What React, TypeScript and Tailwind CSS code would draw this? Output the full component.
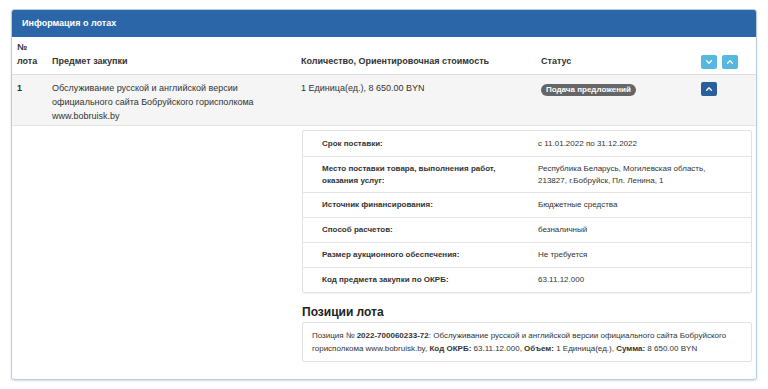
import React from "react";

const details: { label: string; value: React.ReactNode; tall?: boolean }[] = [
  { label: "Срок поставки:", value: "с 11.01.2022 по 31.12.2022" },
  {
    label: "Место поставки товара, выполнения работ, оказания услуг:",
    value: "Республика Беларусь, Могилевская область, 213827, г.Бобруйск, Пл. Ленина, 1",
    tall: true,
  },
  { label: "Источник финансирования:", value: "Бюджетные средства" },
  { label: "Способ расчетов:", value: "безналичный" },
  { label: "Размер аукционного обеспечения:", value: "Не требуется" },
  { label: "Код предмета закупки по ОКРБ:", value: "63.11.12.000" },
];

// small chevron used on the toggle buttons
function Chevron({ up }: { up?: boolean }) {
  return (
    <svg width="8" height="8" viewBox="0 0 10 10" fill="none">
      <path
        d={up ? "M2 6.5 L5 3.5 L8 6.5" : "M2 3.5 L5 6.5 L8 3.5"}
        stroke="white"
        strokeWidth="1.6"
        strokeLinecap="round"
        strokeLinejoin="round"
      />
    </svg>
  );
}

function ToggleButton({ up, dark }: { up?: boolean; dark?: boolean }) {
  return (
    <button
      className={
        dark
          ? "flex h-[14px] w-[16px] items-center justify-center rounded-[2px] bg-[#2b5f9c]"
          : "flex h-[14px] w-[16px] items-center justify-center rounded-[2px] bg-[#55b8de]"
      }
    >
      <Chevron up={up} />
    </button>
  );
}

export default function App() {
  return (
    <div
      className="h-[389px] w-[768px] bg-white px-[11px] pt-[9px] text-[#333]"
      style={{ fontFamily: '"Liberation Sans", Arial, sans-serif' }}
    >
      <div className="h-[371px] overflow-hidden rounded-[3px] border border-[#b9cde0] shadow-[0_1px_2px_rgba(0,0,0,0.15)]">
        <div className="flex h-[27px] items-center bg-[#2b66a9] px-[10px] text-[9px] font-bold text-white">
          Информация о лотах
        </div>

        {/* table head */}
        <div className="flex h-[38px] items-end border-b border-[#dcdcdc] pb-[6px] text-[9px] font-bold leading-[14px]">
          <div className="w-[40px] pl-[5px]">
            №<br />
            лота
          </div>
          <div className="w-[249px]">Предмет закупки</div>
          <div className="w-[240px]">Количество, Ориентировочная стоимость</div>
          <div className="w-[160px]">Статус</div>
          <div className="mb-[-1px] flex gap-[5px]">
            <ToggleButton />
            <ToggleButton up />
          </div>
        </div>

        {/* lot row */}
        <div className="flex h-[51px] border-b border-[#e4e4e4] bg-[#f5f5f5] pt-[6px] text-[9px] leading-[14px]">
          <div className="w-[40px] pl-[5px] font-bold">1</div>
          <div className="w-[249px] pr-[40px]">
            Обслуживание русской и английской версии официального сайта Бобруйского горисполкома
            www.bobruisk.by
          </div>
          <div className="w-[240px]">1 Единица(ед.), 8 650.00 BYN</div>
          <div className="w-[160px] pt-[1px]">
            <span className="inline-flex h-[12px] items-center rounded-full bg-[#666] px-[5px] text-[8px] font-bold text-white">
              Подача предложений
            </span>
          </div>
          <div className="pt-[1px]">
            <ToggleButton up dark />
          </div>
        </div>

        {/* expanded details */}
        <div className="ml-[290px] mr-[4px] pt-[4px]">
          <div className="rounded-[2px] border border-[#e2e2e2] text-[8px] leading-[12px] shadow-[0_1px_1px_rgba(0,0,0,0.04)]">
            {details.map((d, i) => (
              <div
                key={d.label}
                className={
                  (i > 0 ? "border-t border-[#e4e4e4] " : "") +
                  (d.tall ? "h-[36px] " : "h-[25px] ") +
                  "flex items-center"
                }
              >
                <div className="w-[235px] pl-[19px] pr-[20px] font-bold">{d.label}</div>
                <div className="w-[190px]">{d.value}</div>
              </div>
            ))}
          </div>

          <h3 className="mt-[11px] text-[12px] font-bold leading-[16px] text-[#222]">Позиции лота</h3>

          <div className="mt-[2px] rounded-[2px] border border-[#e2e2e2] px-[9px] py-[6px] text-[8px] leading-[13px]">
            <div>
              Позиция № <b>2022-700060233-72</b>: Обслуживание русской и английской версии официального
              сайта Бобруйского
            </div>
            <div>
              горисполкома www.bobruisk.by, <b>Код ОКРБ:</b> 63.11.12.000, <b>Объем:</b> 1
              Единица(ед.), <b>Сумма:</b> 8 650.00 BYN
            </div>
          </div>
        </div>
      </div>
    </div>
  );
}
